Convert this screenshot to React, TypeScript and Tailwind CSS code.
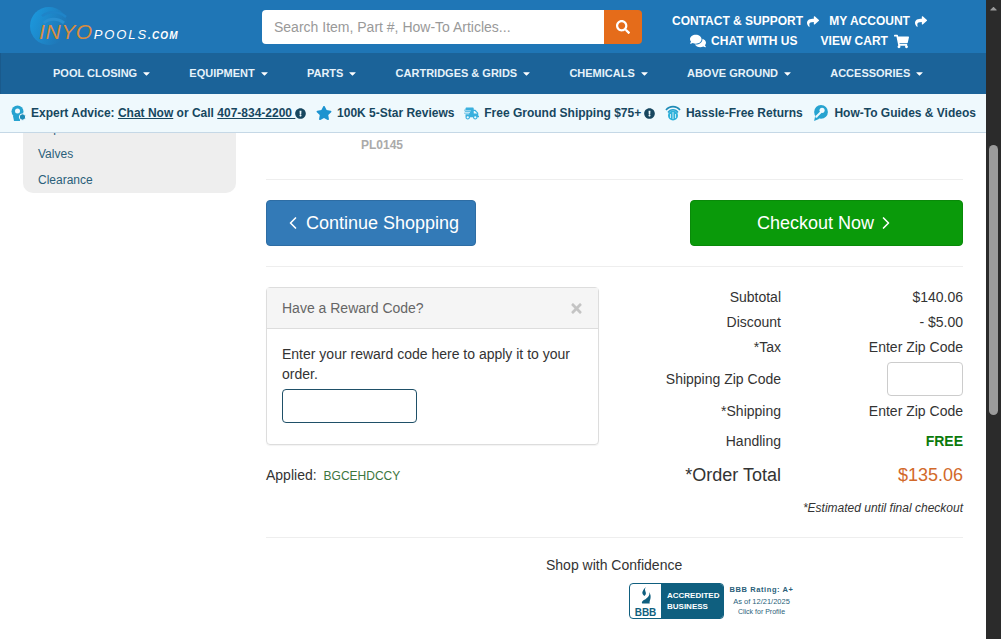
import React from "react";
import { FaSearch, FaShare, FaComments, FaShoppingCart, FaExclamationCircle, FaStar, FaShippingFast, FaTimes, FaCaretDown, FaCaretUp } from "react-icons/fa";
import { ChevronLeft, ChevronRight } from "lucide-react";

const nav = ["POOL CLOSING", "EQUIPMENT", "PARTS", "CARTRIDGES & GRIDS", "CHEMICALS", "ABOVE GROUND", "ACCESSORIES"];

function Logo() {
  return (
    <div className="relative w-[150px] h-[40px]">
      <svg className="absolute left-0 top-0" width="42" height="40" viewBox="0 0 42 40">
        <defs>
          <linearGradient id="sw" x1="0" y1="0" x2="1" y2="0.4">
            <stop offset="0" stopColor="#1b9be0" />
            <stop offset="1" stopColor="#1f76b6" />
          </linearGradient>
        </defs>
        <circle cx="19" cy="19" r="19" fill="url(#sw)" />
        <path d="M14 16c5-5 14-5 20 0" fill="none" stroke="#2a8fd0" strokeWidth="3" />
        <path d="M12 9c7-5 17-5 24 1" fill="none" stroke="#1f84c8" strokeWidth="2.5" />
      </svg>
      <div className="absolute left-[9px] top-[14px] flex items-baseline italic leading-none whitespace-nowrap">
        <span className="text-[21px] text-[#d98d3e] tracking-[0.6px]">INYO</span>
        <span className="text-[13px] text-white tracking-[1.9px] ml-[1px]">POOLS</span>
        <span className="text-[10px] text-white tracking-[1.1px] font-bold">.COM</span>
      </div>
    </div>
  );
}

function ChatHead() {
  return (
    <svg width="15" height="16" viewBox="0 0 15 16">
      <circle cx="6.5" cy="6.5" r="6" fill="#27a3d0" />
      <path d="M2 11h7v5H3z" fill="#27a3d0" />
      <circle cx="6.5" cy="6" r="2.5" fill="#eff9fd" />
      <circle cx="11.5" cy="12" r="3.2" fill="#1e8bb6" stroke="#eff9fd" />
    </svg>
  );
}

function Returns() {
  return (
    <svg width="16" height="16" viewBox="0 0 16 16" fill="none">
      <path d="M1 5a9 9 0 0 1 14 0" stroke="#1e8bb6" strokeWidth="1.6" />
      <path d="M3 7.5a6 6 0 0 1 10 0" stroke="#27a3d0" strokeWidth="1.4" />
      <circle cx="8" cy="10.5" r="5" fill="#2fb2da" />
      <path d="M8 7v7M5.5 9v4M10.5 9v4" stroke="#eff9fd" strokeWidth="0.8" />
    </svg>
  );
}

function Guides() {
  return (
    <svg width="17" height="18" viewBox="0 0 16 17" fill="none">
      <circle cx="8.5" cy="7.5" r="6.5" fill="#27a3d0" />
      <path d="M2 16l1-5 4 3z" fill="#27a3d0" />
      <circle cx="9.5" cy="6" r="2.4" fill="#eff9fd" />
      <path d="M8 8l-4 4" stroke="#eff9fd" strokeWidth="1.8" strokeLinecap="round" />
    </svg>
  );
}

function BBB() {
  return (
    <div className="flex items-start">
      <div className="w-[95px] h-[36px] flex rounded-[4px] border border-[#0f5f7f] overflow-hidden bg-white">
        <div className="w-[31px] flex flex-col items-center justify-end">
          <svg width="14" height="22" viewBox="0 0 13 20">
            <path d="M7 0C3 4 9 6 5 9 3 7 2 6 5 2zM9 5c2 3-1 6-3 7-3 1-4 3-3 4h7c-1-2 3-6-1-11z" fill="#0f5f7f" />
          </svg>
          <span className="text-[10px] font-bold leading-[10px] text-[#0f5f7f]">BBB</span>
        </div>
        <div className="flex-1 bg-[#0f5f7f] flex flex-col justify-center pl-[6px] text-white text-[8px] leading-[11px] font-bold">
          <span>ACCREDITED</span>
          <span>BUSINESS</span>
        </div>
      </div>
      <div className="w-[72px] text-center pl-[3px] text-[#2a5f7a]">
        <div className="text-[7.5px] font-bold tracking-[0.6px] leading-[12px] mt-[1px] whitespace-nowrap">BBB Rating: A+</div>
        <div className="text-[7.5px] leading-[9px] mt-[1px] whitespace-nowrap">As of 12/21/2025</div>
        <div className="text-[7px] leading-[9px] mt-[1px] whitespace-nowrap">Click for Profile</div>
      </div>
    </div>
  );
}

function Row({ label, value, className = "" }: { label: React.ReactNode; value: React.ReactNode; className?: string }) {
  return (
    <div className={`flex items-center ${className}`}>
      <div className="w-[182px] text-right">{label}</div>
      <div className="flex-1 text-right">{value}</div>
    </div>
  );
}

export default function App() {
  return (
    <div className="flex w-[1001px] h-[639px] overflow-hidden bg-white text-[#333] text-[14px] font-['Liberation_Sans',Arial,sans-serif]">
      <div className="w-[986px] h-full flex flex-col">
        <header className="shrink-0 relative z-10">
          <div className="h-[53px] bg-[#1f76b6] flex items-center text-white">
            <div className="w-[262px] pl-[30px] pt-[1px]"><Logo /></div>
            <div className="w-[380px] h-[34px] mt-[1px] flex rounded-[4px] overflow-hidden">
              <div className="w-[342px] bg-white text-[#999] text-[14px] leading-[34px] pl-[12px]">Search Item, Part #, How-To Articles...</div>
              <div className="flex-1 bg-[#e56c1a] flex items-center justify-center"><FaSearch className="text-[14px] text-white" /></div>
            </div>
            <div className="w-[255px] ml-[30px] text-[12px] font-bold leading-[20px] pt-[9px]">
              <div className="flex items-center justify-center whitespace-nowrap">
                <span>CONTACT &amp; SUPPORT</span><FaShare className="ml-[4px] text-[13px]" />
                <span className="ml-[10px]">MY ACCOUNT</span><FaShare className="ml-[5px] text-[13px]" />
              </div>
              <div className="flex items-center justify-center whitespace-nowrap">
                <FaComments className="mr-[5px] text-[16px]" /><span>CHAT WITH US</span>
                <span className="ml-[23px]">VIEW CART</span><FaShoppingCart className="ml-[6px] text-[15px]" />
              </div>
            </div>
          </div>
          <nav className="h-[41px] bg-[#1b6399] border-l border-[#1a5a8c] flex items-center pl-[52px] gap-[37.2px] text-[#e6f2fa] text-[11px] font-bold whitespace-nowrap">
            {nav.map((n) => (
              <span key={n} className="flex items-center">{n}<FaCaretDown className="ml-[4px] text-[11px] text-white" /></span>
            ))}
          </nav>
          <div className="h-[39px] bg-[#eff9fd] border-b border-[#c5d8e6] flex items-center justify-between pl-[11px] pr-[10px] text-[#17475f] text-[12px] font-bold whitespace-nowrap">
            <span className="flex items-center">
              <ChatHead /><span className="ml-[5px]">Expert Advice: <u>Chat Now</u> or Call <u>407-834-2200&nbsp;</u></span>
              <FaExclamationCircle className="text-[11px] text-[#17475f]" />
            </span>
            <span className="flex items-center"><FaStar className="text-[16px] text-[#1c93d0] mr-[5px]" />100K 5-Star Reviews</span>
            <span className="flex items-center"><FaShippingFast className="text-[15px] text-[#3ab0de] mr-[5px]" />Free Ground Shipping $75+<FaExclamationCircle className="ml-[3px] text-[11px]" /></span>
            <span className="flex items-center"><Returns /><span className="ml-[5px]">Hassle-Free Returns</span></span>
            <span className="flex items-center"><Guides /><span className="ml-[5px]">How-To Guides &amp; Videos</span></span>
          </div>
        </header>

        <div className="flex-1 overflow-hidden">
          <div className="flex pl-[23px] -mt-[26px] gap-[30px]">
            <aside className="w-[213px] h-[86px] shrink-0 bg-[#eee] rounded-b-[10px] pl-[15px] pt-[8px] text-[12px] leading-[26px] text-[#2a5f7a]">
              <div>Repairs</div>
              <div>Valves</div>
              <div>Clearance</div>
            </aside>
            <main className="w-[697px] shrink-0">
              <div className="pl-[95px] pt-[31px] h-[73px] text-[12px] font-bold text-[#aaa] leading-[14px] border-b border-[#eee]">PL0145</div>
              <div className="flex justify-between pt-[20px] pb-[20px] border-b border-[#eee]">
                <div className="w-[210px] h-[46px] bg-[#337ab7] border border-[#2e6da4] rounded-[4px] text-white text-[18px] flex items-center justify-center">
                  <ChevronLeft size={20} className="mr-[3px]" />Continue Shopping
                </div>
                <div className="w-[273px] h-[46px] bg-[#0a9a0a] border border-[#098a09] rounded-[4px] text-white text-[18px] flex items-center justify-center">
                  Checkout Now<ChevronRight size={20} className="ml-[2px]" />
                </div>
              </div>
              <div className="flex pt-[20px] h-[271px] border-b border-[#eee]">
                <div className="w-[333px] shrink-0">
                  <div className="h-[158px] border border-[#ddd] rounded-[4px] shadow-[0_1px_1px_rgba(0,0,0,0.05)]">
                    <div className="h-[41px] bg-[#f5f5f5] border-b border-[#ddd] flex items-center justify-between pl-[15px] pr-[14px] text-[#666]">
                      <span>Have a Reward Code?</span>
                      <FaTimes className="text-[15px] text-[#c4c4c4]" />
                    </div>
                    <div className="px-[15px] pt-[15px] leading-[20px]">
                      <p>Enter your reward code here to apply it to your order.</p>
                      <div className="w-[135px] h-[34px] mt-[5px] border border-[#1f5068] rounded-[4px] bg-white" />
                    </div>
                  </div>
                  <div className="mt-[20px] flex items-baseline">
                    <span>Applied:</span>
                    <span className="ml-[7px] text-[12px] text-[#3c763d]">BGCEHDCCY</span>
                  </div>
                </div>
                <div className="flex-1">
                  <Row className="h-[20px]" label="Subtotal" value="$140.06" />
                  <Row className="h-[25px] mt-[3px]" label="Discount" value="- $5.00" />
                  <Row className="h-[25px]" label="*Tax" value="Enter Zip Code" />
                  <Row
                    className="h-[34px] mt-[2px]"
                    label="Shipping Zip Code"
                    value={<div className="w-[76px] h-[34px] ml-auto border border-[#ccc] rounded-[4px]" />}
                  />
                  <Row className="h-[30px]" label="*Shipping" value="Enter Zip Code" />
                  <Row className="h-[30px]" label="Handling" value={<span className="font-bold text-[#0a7a0a]">FREE</span>} />
                  <Row
                    className="h-[38px]"
                    label={<span className="text-[18px]">*Order Total</span>}
                    value={<span className="text-[18px] text-[#d2692a]">$135.06</span>}
                  />
                  <div className="text-right italic text-[12px] mt-[4px] leading-[20px]">*Estimated until final checkout</div>
                </div>
              </div>
              <div className="pt-[17px] pl-[280px] leading-[20px]">Shop with Confidence</div>
              <div className="pl-[363px] pt-[8px]"><BBB /></div>
            </main>
          </div>
        </div>
      </div>
      <div className="w-[15px] h-full bg-[#2b2b2b] relative">
        <FaCaretUp className="absolute left-[2px] top-[3px] text-[11px] text-[#9b9b9b]" />
        <div className="absolute left-[3px] top-[145px] w-[9px] h-[270px] rounded-full bg-[#9b9b9b]" />
      </div>
    </div>
  );
}
